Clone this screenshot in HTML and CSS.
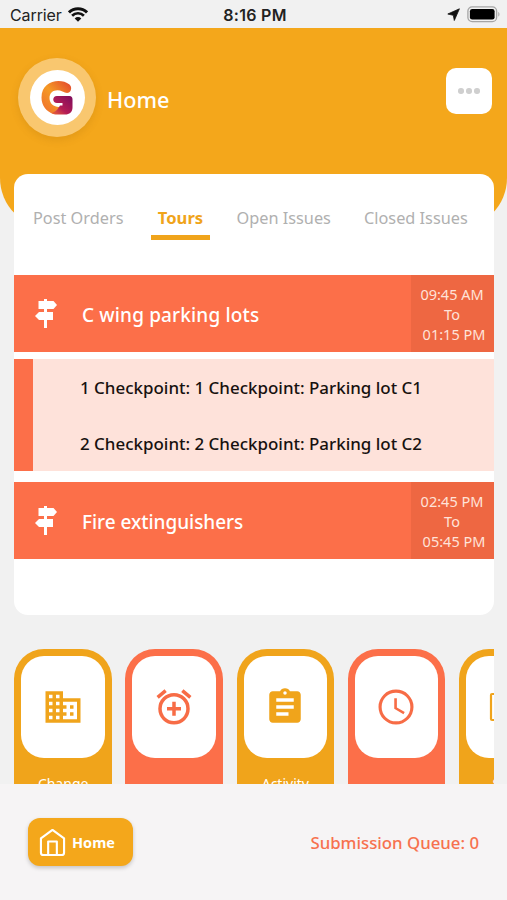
FILE: index.html
```html
<!DOCTYPE html>
<html lang="en">
<head>
<meta charset="utf-8">
<title>Home</title>
<link rel="stylesheet" href="styles.css">
</head>
<body>
<div class="app">
  <div class="status">
    <div class="carrier"><span>Carrier</span>
      <svg width="20" height="15" viewBox="0 0 20 15" fill="none" stroke="#111"><path d="M1 5.400a12.800 12.800 0 0 1 18 0" stroke-width="2.900"/><path d="M4.100 8.700a8.300 8.300 0 0 1 11.800 0" stroke-width="2.700"/><path d="M10 14.800 6.700 11.400a4.700 4.700 0 0 1 6.600 0z" fill="#111" stroke="none"/></svg>
    </div>
    <div class="clock">8:16 PM</div>
    <div class="indicators">
      <svg width="13" height="13" viewBox="0 0 13 13"><path d="M12.400.8 7.300 12.500 6.300 7.300.8 6z" fill="#111" stroke="#111" stroke-width=".8" stroke-linejoin="round"/></svg>
      <svg width="33" height="17" viewBox="0 0 33 17"><rect x=".9" y=".9" width="28.700" height="14.700" rx="4.200" fill="#f1f1f1" stroke="#a5a5a5" stroke-width="1.300"/><rect x="2.900" y="2.900" width="24.700" height="10.700" rx="2.300"/><path d="M31.300 6c1.500.6 1.500 4 0 4.600z" fill="#a5a5a5"/></svg>
    </div>
  </div>
  <header class="header">
    <div class="avatar"><div class="logo">
      <svg width="34" height="38" viewBox="0 0 34 38"><defs><linearGradient id="g1" x1="1" y1="0" x2="0" y2="1"><stop offset="0" stop-color="#e2432f"/><stop offset=".5" stop-color="#f59a25"/><stop offset="1" stop-color="#ef6a2f"/></linearGradient><linearGradient id="g2" x1="0" y1="1" x2="1" y2="0"><stop offset="0" stop-color="#ee6b32"/><stop offset=".4" stop-color="#b51d55"/><stop offset="1" stop-color="#7d0c5c"/></linearGradient></defs>
      <path d="M29.500 5.500C20-1.500 1.500 2 1.500 18.500c0 8.500 5 14 12 16.500l6.500-7c-6 .5-10.500-3.500-10.500-9 0-7 7-9.500 13-6.500 3.500 2 6.500 2 8-.5 1-2 1-4.500-1-6.500z" fill="url(#g1)"/>
      <path d="M17 17h12.500c2 0 3 1.500 3 3.500v8c0 4.500-3 7-7.500 7h-8c-2 0-4-.5-5.500-1.500 4.500-1 6.500-4.500 8.500-7.500h2.500v-2.500H17c-5 0-5-7 0-7z" fill="url(#g2)"/></svg>
    </div></div>
    <h1 class="title">Home</h1>
    <button class="more" aria-label="More"><i></i><i></i><i></i></button>
  </header>
  <main class="card">
    <nav class="tabs"><span class="t1">Post Orders</span><span class="t2 active">Tours</span><span class="t3">Open Issues</span><span class="t4">Closed Issues</span></nav>
    <section class="tour">
      <svg class="sign" width="22" height="29" viewBox="0 0 22 29"><path d="M9 0h3v2h6.500L22 6l-3.500 4H12v3h6v8h-6v8H9v-8H4l-4-4 4-4h5v-3H3.500V2H9z" fill="#fff"/></svg>
      <h2 class="name n1">C wing parking lots</h2>
      <div class="time"><span>09:45 AM</span><span>To</span><span class="end">01:15 PM</span></div>
    </section>
    <section class="points"><p>1 Checkpoint: 1 Checkpoint: Parking lot C1</p><p>2 Checkpoint: 2 Checkpoint: Parking lot C2</p></section>
    <section class="tour">
      <svg class="sign" width="22" height="29" viewBox="0 0 22 29"><path d="M9 0h3v2h6.500L22 6l-3.500 4H12v3h6v8h-6v8H9v-8H4l-4-4 4-4h5v-3H3.500V2H9z" fill="#fff"/></svg>
      <h2 class="name n2">Fire extinguishers</h2>
      <div class="time"><span>02:45 PM</span><span>To</span><span class="end">05:45 PM</span></div>
    </section>
  </main>
  <section class="tiles">
    <div class="tile"><div class="face"><svg width="42" height="42" viewBox="0 0 24 24" fill="#f0a41b"><path d="M12 7V3H2v18h20V7H12zM6 19H4v-2h2v2zm0-4H4v-2h2v2zm0-4H4V9h2v2zm0-4H4V5h2v2zm4 12H8v-2h2v2zm0-4H8v-2h2v2zm0-4H8V9h2v2zm0-4H8V5h2v2zm10 12h-8v-2h2v-2h-2v-2h2v-2h-2V9h8v10zm-2-8h-2v2h2v-2zm0 4h-2v2h2v-2z"/></svg></div><span>Change</span></div>
    <div class="tile coral"><div class="face"><svg width="42" height="42" viewBox="0 0 24 24" fill="#f76c46"><path d="M7.880 3.390 6.600 1.860 2 5.710l1.290 1.530 4.590-3.850zM22 5.720l-4.600-3.860-1.290 1.530 4.600 3.860L22 5.720zM12 4a9 9 0 1 0 0 18 9 9 0 0 0 0-18zm0 16a7 7 0 1 1 0-14 7 7 0 0 1 0 14zm1-11h-2v3H8v2h3v3h2v-3h3v-2h-3V9z"/></svg></div></div>
    <div class="tile"><div class="face"><svg width="42" height="42" viewBox="0 0 24 24" fill="#f0a41b"><path d="M19 3h-4.180C14.400 1.840 13.300 1.300 12 1.300s-2.400.54-2.820 1.700H5c-1.100 0-2 .9-2 2v14c0 1.100.9 2 2 2h14c1.100 0 2-.9 2-2V5c0-1.100-.9-2-2-2zm-7 0a1 1 0 1 1 0 2 1 1 0 0 1 0-2zm2 14H7v-2h7v2zm3-4H7v-2h10v2zm0-4H7V7h10v2z"/></svg></div><span>Activity</span></div>
    <div class="tile coral"><div class="face"><svg width="42" height="42" viewBox="0 0 24 24" fill="#f76c46"><path d="M12 2a10 10 0 1 0 0 20 10 10 0 0 0 0-20zm0 18.200a8.200 8.200 0 1 1 0-16.400 8.200 8.200 0 0 1 0 16.400zM12.500 7H11v6l5.250 3.150.75-1.230-4.500-2.670z"/></svg></div></div>
    <div class="tile"><div class="face"><svg width="38" height="30" viewBox="0 0 38 30" fill="none" stroke="#f0a41b" stroke-width="2.200"><rect x="2" y="2" width="34" height="26" rx="1"/></svg></div><span>Shift</span></div>
  </section>
  <footer class="footer">
    <button class="home"><svg width="27" height="29" viewBox="0 0 28 29" fill="none" stroke="#fff" stroke-width="2.200" stroke-linejoin="round"><path d="M14 1.500 2 10.200V25q0 2.500 2.500 2.500h19Q26 27.500 26 25V10.200z"/><path d="M9.500 27V13.500h9V27"/></svg><span>Home</span></button>
    <span class="queue">Submission Queue: 0</span>
  </footer>
</div>
</body>
</html>
```
FILE: styles.css
```css
* { box-sizing: border-box; }
body { margin: 0; background: #f1f1f1; font-family: "Noto Sans", "Open Sans", sans-serif; }
button { border: 0; padding: 0; font: inherit; }
h1, h2, p { margin: 0; }
svg { display: block; flex: none; }
.app { width: 507px; height: 900px; overflow: hidden; display: flex; flex-direction: column; }

.status { height: 28px; flex: none; display: grid; grid-template-columns: 1fr auto 1fr; align-items: center; padding: 1px 7px 0 10px; font-family: Inter, sans-serif; color: #222; background: #f1f1f1; }
.carrier { display: flex; align-items: center; gap: 6px; font-size: 16px; letter-spacing: -.1px; }
.clock { font-size: 16px; font-weight: 600; letter-spacing: .3px; }
.indicators { display: flex; justify-content: flex-end; align-items: center; gap: 7px; }

.header { height: 200px; flex: none; display: flex; align-items: flex-start; background: #f4a71b; border-radius: 0 0 50px 50px; padding: 30px 15px 0 18px; }
.avatar { width: 78px; height: 79px; border-radius: 50%; background: #f9c76f; display: grid; place-items: center; box-shadow: 0 3px 8px rgba(120, 70, 0, .14); }
.logo { width: 55px; height: 55px; border-radius: 50%; background: #fff; display: grid; place-items: center; }
.title { margin: 27px auto 0 11px; font-size: 21.700px; line-height: 30px; font-weight: 500; color: #fff; }
.more { width: 46px; height: 46px; margin-top: 10px; border-radius: 10px; background: #fff; display: flex; justify-content: center; align-items: center; gap: 2.500px; }
.more i { width: 5.500px; height: 5.500px; border-radius: 50%; background: #cfcfcf; }

.card { width: 480px; height: 441px; flex: none; margin: -54px 0 0 14px; background: #fff; border-radius: 14px; }
.tabs { height: 101px; display: flex; padding: 32px 0 0 19px; font-size: 16.300px; line-height: 24px; color: #b0b0b0; }
.tabs span { white-space: nowrap; height: 34px; }
.t1 { width: 118px; }
.t2 { width: 59px; text-align: center; }
.t3 { margin-left: 26.500px; width: 127.500px; }
.tabs .active { color: #f0a41b; font-size: 16.600px; font-weight: 700; border-bottom: 5px solid #f0a41b; }

.tour { height: 77px; display: flex; align-items: center; background: #fc6f49; color: #fff; padding-left: 21px; }
.name { margin: 3px auto 0 25px; font-size: 19px; line-height: 28px; font-weight: 500; white-space: nowrap; }
.n1 { letter-spacing: .15px; }
.n2 { letter-spacing: -.04px; }
.time { width: 83px; height: 100%; background: #ee6742; display: flex; flex-direction: column; align-items: center; padding: 9px 1px 0 0; font-size: 14.500px; line-height: 20px; color: #ffe3d9; }
.time .end { padding-left: 4px; }
.points { height: 112px; margin: 7px 0 11px; padding: 1px 0 0 47px; border-left: 19px solid #fc6f49; background: #fee2da; }
.points p { height: 56px; line-height: 56px; font-size: 16.950px; font-weight: 500; color: #17110f; white-space: nowrap; }

.tiles { width: 480px; height: 135px; flex: none; margin: 34px 0 0 14px; padding-left: .4px; overflow: hidden; display: flex; gap: 13.600px; }
.tile { width: 97.500px; height: 170px; flex: none; border-radius: 30px; background: #f0a41b; padding: 7px; color: #fff; text-align: center; font-size: 14px; line-height: 20px; }
.tile span { display: block; margin-top: 16px; }
.coral { background: #fc6f49; }
.face { height: 102px; border-radius: 23px; background: #fff; display: grid; place-items: center; }

.footer { flex: 1; background: #f6f4f5; display: flex; align-items: flex-start; justify-content: space-between; padding: 34px 28px 0; }
.home { width: 105px; height: 48px; border-radius: 12px; background: #f4a71b; color: #fff; display: flex; align-items: center; padding-left: 10.500px; gap: 6.500px; font-size: 14.500px; font-weight: 700; box-shadow: 0 2px 4px rgba(0, 0, 0, .2); }
.queue { margin-top: 13px; font-size: 16.800px; line-height: 24px; font-weight: 500; color: #f7714e; }
```
